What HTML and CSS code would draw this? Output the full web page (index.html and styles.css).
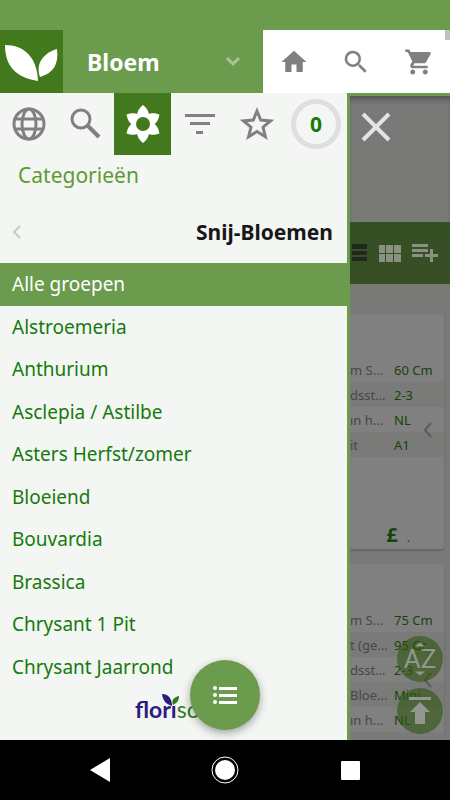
FILE: index.html
```html
<!DOCTYPE html>
<html lang="nl">
<head>
<meta charset="utf-8">
<meta name="viewport" content="width=device-width, initial-scale=1">
<title>Florisoft</title>
<link rel="stylesheet" href="styles.css">
</head>
<body>
<div class="app">
  <div class="status-bar"></div>

  <header class="header">
    <a class="brand" href="#" aria-label="Start">
      <svg width="63" height="63" viewBox="0 0 63 63"><path d="M5 15C24 15 37 27 38 51C18 48 5 38 5 15Z"/><path d="M57 19C44 23 35 33 40 47C53 43 59 35 57 19Z"/></svg>
    </a>
    <button class="picker" type="button">
      <span>Bloem</span>
      <svg width="16" height="11" viewBox="0 0 16 11"><path d="M2 2l6 6l6-6"/></svg>
    </button>
    <nav class="quick">
      <a href="#" aria-label="Home"><svg width="30" height="30" viewBox="0 0 24 24"><path d="M10 20v-6h4v6h5v-8h3L12 3 2 12h3v8z"/></svg></a>
      <a href="#" aria-label="Zoeken"><svg width="30" height="30" viewBox="0 0 24 24"><path d="M15.500 14h-.8l-.3-.3A6.500 6.500 0 1 0 13.700 14.400l.3.300v.8l5 5 1.500-1.500zM9.500 14a4.500 4.500 0 1 1 0-9 4.500 4.500 0 0 1 0 9z"/></svg></a>
      <a href="#" aria-label="Winkelwagen"><svg width="30" height="30" viewBox="0 0 24 24"><path d="M7 18c-1.100 0-2 .9-2 2s.9 2 2 2 2-.9 2-2-.9-2-2-2zM1 2v2h2l3.600 7.600-1.400 2.400C4.500 15.400 5.500 17 7 17h12v-2H7.400l1.100-2h7.500c.7 0 1.400-.4 1.700-1L21.300 5.500c.4-.7-.1-1.500-.9-1.500H5.200l-.9-2zM17 18c-1.100 0-2 .9-2 2s.9 2 2 2 2-.9 2-2-.9-2-2-2z"/></svg></a>
    </nav>
    <span class="scroll-thumb"></span>
  </header>

  <main class="main">
    <aside class="drawer">
      <div class="tabs">
        <button type="button" aria-label="Taal"><svg width="40" height="40" viewBox="0 0 40 40" class="line"><circle cx="20" cy="20" r="15"/><ellipse cx="20" cy="20" rx="7" ry="15"/><path d="M6 15h28M6 25h28"/></svg></button>
        <button type="button" aria-label="Zoeken"><svg width="40" height="40" viewBox="0 0 40 40" class="line"><circle cx="15" cy="15" r="9"/><path d="M21 21l12 12" class="thick"/></svg></button>
        <button type="button" class="active" aria-label="Bloemen"><svg width="44" height="44" viewBox="0 0 44 44">
          <g transform="translate(22 22)"><path id="petal" d="M0-19C6-14 7-9 5-5L0 0L-5-5C-7-9-6-14 0-19Z"/><use href="#petal" transform="rotate(60)"/><use href="#petal" transform="rotate(120)"/><use href="#petal" transform="rotate(180)"/><use href="#petal" transform="rotate(240)"/><use href="#petal" transform="rotate(300)"/><circle r="10"/><circle r="7" class="heart"/></g></svg></button>
        <button type="button" aria-label="Filter"><svg width="40" height="40" viewBox="0 0 40 40"><path d="M5 10h30v3H5zM10 18h20v3H10zM16 27h7v3h-7z"/></svg></button>
        <button type="button" aria-label="Favorieten"><svg width="40" height="40" viewBox="0 0 40 40" class="star"><path d="M20 7L23.700 16.100L33.500 16.900L26 23.200L28.400 32.700L20 27.500L11.600 32.700L14 23.200L6.500 16.900L16.300 16.100Z"/></svg></button>
        <button type="button" class="counter-tab"><span class="counter">0</span></button>
      </div>
      <h1 class="title">Categorieën</h1>
      <div class="group">
        <button type="button" aria-label="Terug"><svg width="10" height="16" viewBox="0 0 10 16"><path d="M8 2L2 8l6 6"/></svg></button>
        <h2>Snij-Bloemen</h2>
      </div>
      <ul class="categories">
        <li><a class="selected" href="#">Alle groepen</a></li>
        <li><a href="#">Alstroemeria</a></li>
        <li><a href="#">Anthurium</a></li>
        <li><a href="#">Asclepia / Astilbe</a></li>
        <li><a href="#">Asters Herfst/zomer</a></li>
        <li><a href="#">Bloeiend</a></li>
        <li><a href="#">Bouvardia</a></li>
        <li><a href="#">Brassica</a></li>
        <li><a href="#">Chrysant 1 Pit</a></li>
        <li><a href="#">Chrysant Jaarrond</a></li>
      </ul>
      <footer class="logo">
        <span class="wordmark">florı<b>so</b>
          <svg width="18" height="13" viewBox="0 0 18 13"><path class="leaf-a" d="M0 0C6 0 10 4 10 12C4 10 1 7 0 0Z"/><path class="leaf-b" d="M17 2C12 3 9 6 11 11C16 8 17 6 17 2Z"/></svg>
        </span>
      </footer>
    </aside>

    <section class="page">
      <div class="page-top">
        <button type="button" aria-label="Sluiten"><svg width="30" height="30" viewBox="0 0 30 30"><path d="M2 2l26 26M28 2L2 28"/></svg></button>
      </div>
      <div class="toolbar">
        <button type="button" aria-label="Lijst"><svg width="15" height="18" viewBox="0 0 15 18" class="dark"><path d="M0 0h15v5H0zM0 7h15v4H0zM0 13h15v4H0z"/></svg></button>
        <button type="button" aria-label="Raster"><svg width="22" height="17" viewBox="0 0 22 17"><path d="M0 0h6v8H0zM7 0h7v8H7zM15 0h7v8h-7zM0 9h6v8H0zM7 9h7v8H7zM15 9h7v8h-7z"/></svg></button>
        <button type="button" aria-label="Toevoegen"><svg width="26" height="18" viewBox="0 0 26 18"><path d="M0 0h16v3H0zM0 5h16v3H0zM0 10h11v3H0zM18 5h3v5h5v3h-5v5h-3v-5h-5v-3h5z"/></svg></button>
      </div>
      <div class="cards">
        <article class="card">
          <table>
            <tr><th>m S...</th><td>60 Cm</td></tr>
            <tr><th>dsst...</th><td>2-3</td></tr>
            <tr><th>ın h...</th><td>NL</td></tr>
            <tr><th>it</th><td>A1</td></tr>
          </table>
          <p class="price">£ <small>.</small></p>
          <svg class="prev" width="10" height="16" viewBox="0 0 10 16"><path d="M8 1L2 8l6 7"/></svg>
        </article>
        <article class="card">
          <table>
            <tr><th>m S...</th><td>75 Cm</td></tr>
            <tr><th>t (ge...</th><td>95 Gr...</td></tr>
            <tr><th>dsst...</th><td>2-3</td></tr>
            <tr><th>Bloe...</th><td>Mini</td></tr>
            <tr><th>ın h...</th><td>NL</td></tr>
            <tr><th></th><td></td></tr>
          </table>
          <svg class="prev" width="10" height="16" viewBox="0 0 10 16"><path d="M8 1L2 8l6 7"/></svg>
        </article>
      </div>
      <div class="floating">
        <button type="button" class="sort"><svg width="10" height="5" viewBox="0 0 12 5"><path d="M6 0l6 5H0z"/></svg><span>AZ</span><svg width="10" height="5" viewBox="0 0 12 5"><path d="M0 0h12L6 5z"/></svg></button>
        <button type="button" aria-label="Naar boven"><svg width="24" height="28" viewBox="0 0 24 28"><path d="M1 0h22v3H1zM12 5l10 10h-5v12H7V15H2z"/></svg></button>
      </div>
    </section>

    <button type="button" class="fab" aria-label="Menu"><svg width="24" height="20" viewBox="0 0 24 20"><circle cx="2" cy="3" r="2"/><circle cx="2" cy="10" r="2"/><circle cx="2" cy="17" r="2"/><path d="M6 2h18v3H6zM6 9h18v3H6zM6 16h18v3H6z"/></svg></button>
  </main>

  <nav class="system-nav">
    <button type="button" aria-label="Terug"><svg width="30" height="30" viewBox="0 0 30 30"><path d="M25 3v24L5 15z"/></svg></button>
    <button type="button" aria-label="Start"><svg width="30" height="30" viewBox="0 0 30 30"><circle cx="15" cy="15" r="13" class="ring"/><circle cx="15" cy="15" r="10"/></svg></button>
    <button type="button" aria-label="Overzicht"><svg width="30" height="30" viewBox="0 0 30 30"><rect x="6" y="6" width="19" height="19" rx="1"/></svg></button>
  </nav>
</div>
</body>
</html>
```
FILE: styles.css
```css
:root {
  --green: #6b9b4c;
  --dark-green: #42791c;
  --text-green: #167a0c;
  --paper: #f3f6f3;
  --icon: #808080;
}

* { box-sizing: border-box; }

body {
  margin: 0;
  font-family: "Noto Sans", "Open Sans", sans-serif;
  color: #171717;
}

button {
  margin: 0;
  padding: 0;
  border: 0;
  background: none;
  font: inherit;
  color: inherit;
}

a { color: inherit; text-decoration: none; }
h1, h2, p, ul { margin: 0; padding: 0; }
svg { display: block; flex: none; fill: currentColor; }

.app {
  display: flex;
  flex-direction: column;
  height: 100vh;
  overflow: hidden;
}

.status-bar { flex: 0 0 30px; background: var(--green); }

/* Header */
.header {
  position: relative;
  display: flex;
  flex: 0 0 63px;
  background: #fff;
}
.brand { background: var(--dark-green); color: #fff; }
.picker {
  display: flex;
  flex: 0 0 200px;
  align-items: center;
  justify-content: space-between;
  padding: 0 22px 0 24px;
  background: var(--green);
  color: #fff;
  font-size: 23px;
  font-weight: 700;
}
.picker svg { fill: none; stroke: #a9c498; stroke-width: 3; }
.quick {
  display: flex;
  flex: 1;
  align-items: center;
  justify-content: space-around;
  color: var(--icon);
}
.scroll-thumb {
  position: absolute;
  top: 0;
  right: 0;
  width: 5px;
  height: 10px;
  background: #c0c0c0;
}

.main {
  position: relative;
  display: flex;
  flex: 1;
  min-height: 0;
}

/* Drawer */
.drawer {
  display: flex;
  flex: 0 0 350px;
  flex-direction: column;
  border-right: 3px solid var(--green);
  background: var(--paper);
}
.tabs { display: flex; flex: 0 0 62px; color: var(--icon); }
.tabs button {
  display: flex;
  flex: 0 0 57px;
  align-items: center;
  justify-content: center;
}
.tabs .active { background: var(--dark-green); color: #fff; }
.tabs .counter-tab { flex: 1; }
.heart { fill: var(--dark-green); }
.line { fill: none; stroke: currentColor; stroke-width: 3; }
.thick { stroke-width: 4; }
.star { fill: none; stroke: currentColor; stroke-width: 3; }
.counter {
  display: flex;
  align-items: center;
  justify-content: center;
  width: 50px;
  height: 50px;
  border: 5px solid #dedfde;
  border-radius: 50%;
  color: var(--text-green);
  font-size: 21px;
  font-weight: 700;
}
.title {
  padding-left: 18px;
  color: #5f9a35;
  font-size: 21px;
  font-weight: 400;
  line-height: 40px;
}
.group {
  display: flex;
  flex: 0 0 68px;
  align-items: center;
  justify-content: space-between;
  padding: 6px 14px 0 12px;
}
.group svg { fill: none; stroke: #c9cbc9; stroke-width: 2; }
.group h2 { font-size: 21px; font-weight: 700; }
.categories {
  display: flex;
  flex: 1;
  flex-direction: column;
  list-style: none;
  color: var(--text-green);
  font-size: 19px;
}
.categories li { display: flex; flex: 1; }
.categories a {
  display: flex;
  flex: 1;
  align-items: center;
  padding-left: 12px;
}
.categories .selected {
  margin-right: -3px;
  background: var(--green);
  color: #fff;
}

.logo {
  display: flex;
  flex: 0 0 52px;
  padding-left: 135px;
}
.wordmark {
  position: relative;
  color: #2b1c80;
  font-family: Lato, sans-serif;
  font-size: 23px;
  font-weight: 700;
  line-height: 42px;
}
.wordmark b { color: #2d8018; font-weight: 400; }
.wordmark svg { position: absolute; top: 6px; left: 27px; }
.leaf-b { fill: #2d8018; }

/* Dimmed page behind the drawer */
.page {
  position: relative;
  display: flex;
  flex: 1;
  flex-direction: column;
  min-width: 0;
  overflow: hidden;
  border-top: 3px solid var(--green);
  background: #797a78;
}
.page-top {
  flex: 0 0 126px;
  padding: 16px 11px;
  box-shadow: inset 0 6px 6px -3px #505150;
}
.page-top svg { fill: none; stroke: #e2e2e2; stroke-width: 4; }
.toolbar {
  display: flex;
  flex: 0 0 62px;
  align-items: center;
  justify-content: space-between;
  padding: 0 12px 0 2px;
  background: #374f25;
  color: #8a9183;
}
.toolbar .dark { fill: #22271f; }
.cards {
  display: flex;
  flex-direction: column;
  gap: 15px;
  padding: 30px 6px 0 0;
}
.card {
  position: relative;
  flex: none;
  min-height: 235px;
  padding-top: 43px;
  border-radius: 0 3px 3px 0;
  background: #808080;
  box-shadow: 0 2px 2px #666;
}
.card table {
  width: 100%;
  border-spacing: 0;
  table-layout: fixed;
  font-size: 13px;
  white-space: nowrap;
}
.card tr { height: 25px; }
.card tr:nth-child(even) { background: #7a7b79; }
.card th, .card td { padding: 0; }
.card th {
  width: 44px;
  color: #464646;
  font-weight: 400;
  text-align: left;
}
.card td { color: #164409; }
.price {
  padding: 64px 34px 0 0;
  color: #164409;
  font-size: 20px;
  font-weight: 700;
  line-height: 28px;
  text-align: right;
}
.price small { padding-left: 4px; font-size: 12px; font-weight: 400; line-height: 12px; }
.prev {
  position: absolute;
  top: 108px;
  right: 11px;
  fill: none;
  stroke: #5c5c5c;
  stroke-width: 2;
}

.floating {
  position: absolute;
  right: 7px;
  bottom: 6px;
  display: flex;
  flex-direction: column;
  gap: 6px;
}
.floating button {
  display: flex;
  flex-direction: column;
  align-items: center;
  justify-content: center;
  width: 46px;
  height: 46px;
  border-radius: 50%;
  background: rgba(47, 85, 15, 0.6);
  color: #92978f;
}
.sort span { font-family: Roboto, sans-serif; font-size: 26px; line-height: 24px; }

.fab {
  position: absolute;
  bottom: 10px;
  left: 50%;
  display: flex;
  align-items: center;
  justify-content: center;
  width: 70px;
  height: 70px;
  margin-left: -35px;
  border-radius: 50%;
  background: var(--green);
  box-shadow: 0 3px 8px rgba(0, 0, 0, 0.35);
  color: #fff;
}

.system-nav {
  display: flex;
  flex: 0 0 60px;
  align-items: center;
  justify-content: center;
  gap: 95px;
  background: #000;
  color: #fff;
}
.ring { fill: none; stroke: #fff; stroke-width: 1; }
```
